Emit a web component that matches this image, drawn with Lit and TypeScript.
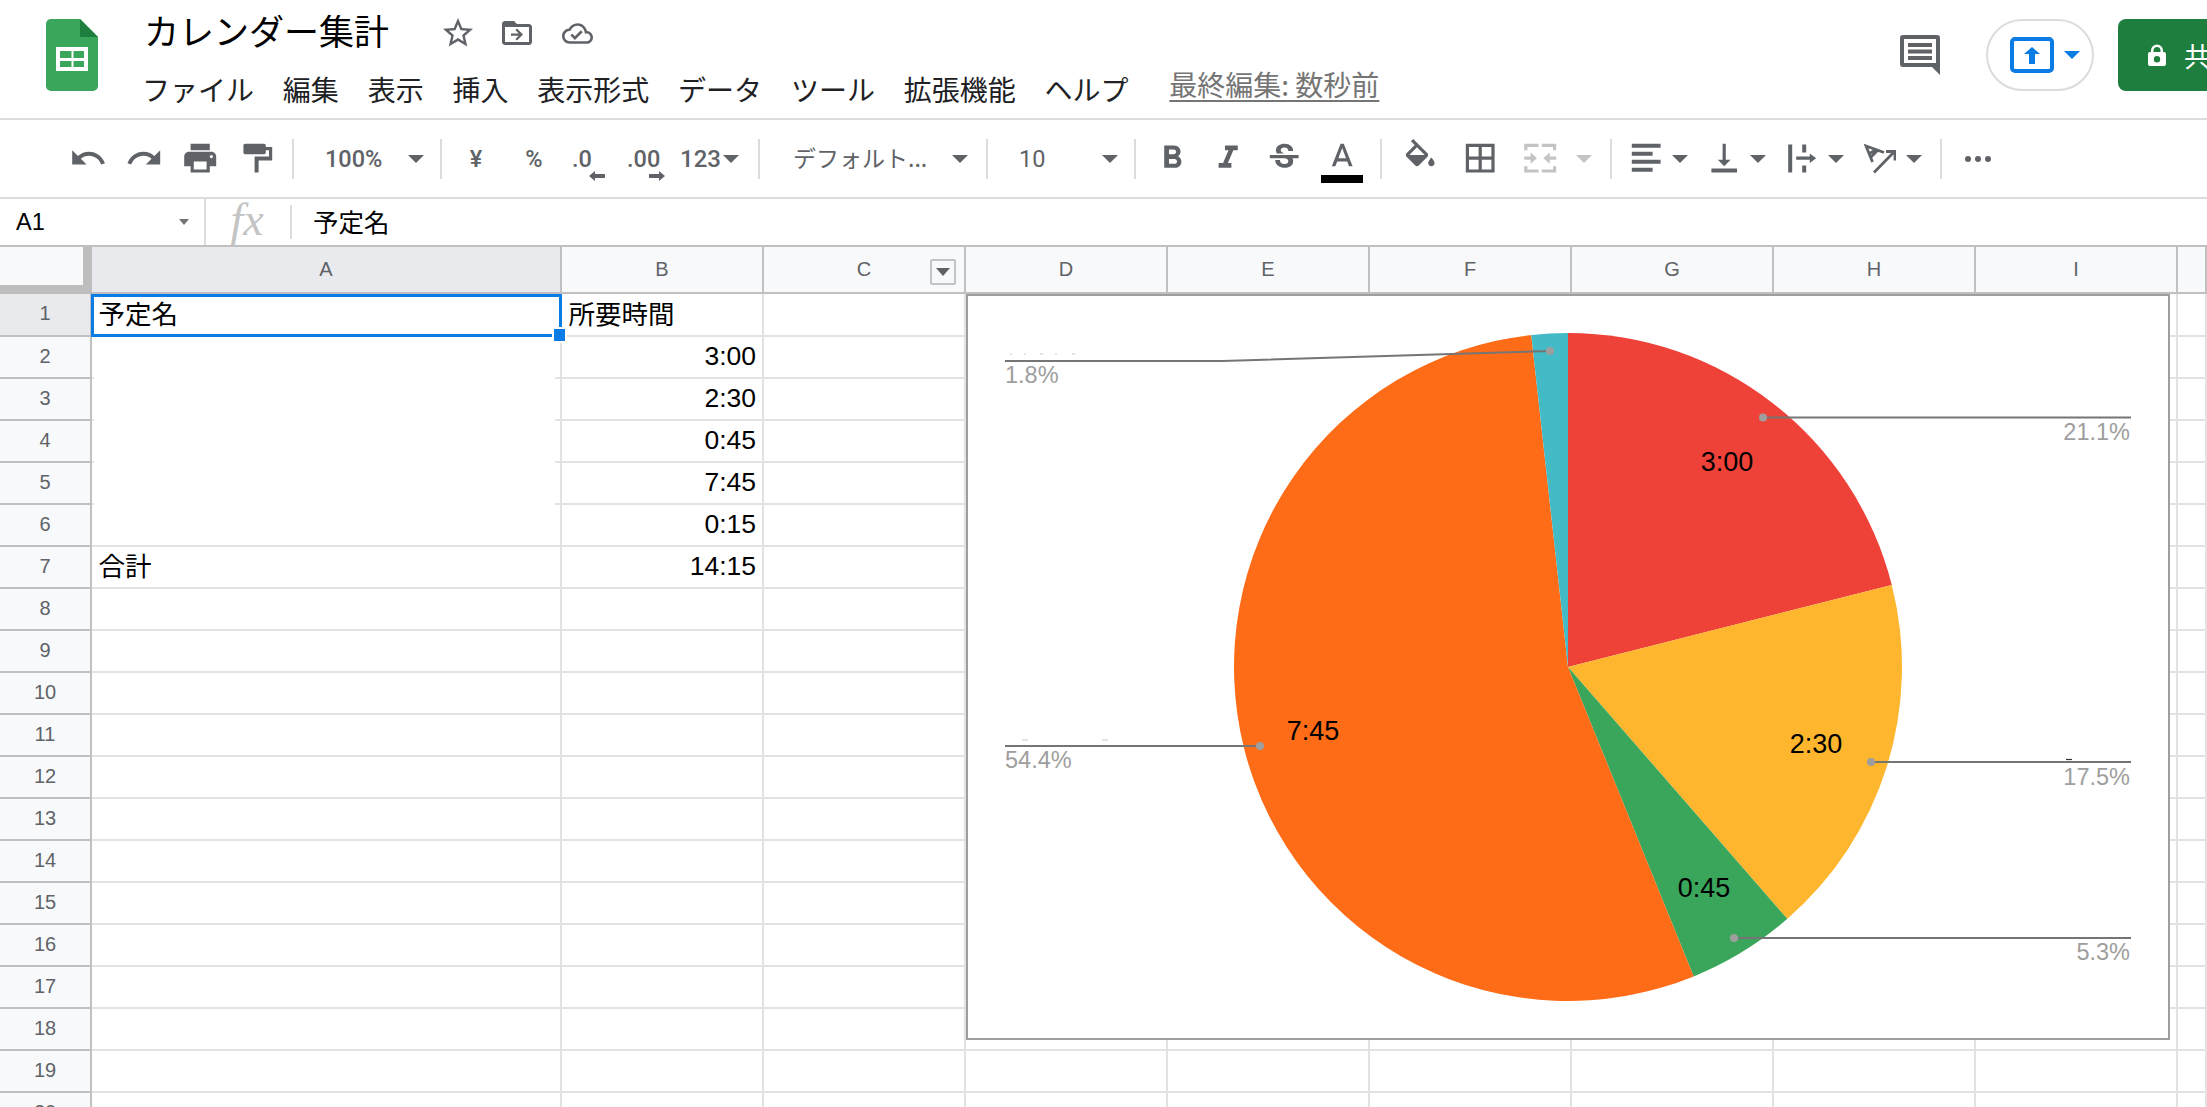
import { LitElement, html, css, svg } from "lit";
import { customElement } from "lit/decorators.js";

const ICON = {
  undo: "M12.5 8c-2.65 0-5.05.99-6.9 2.6L2 7v9h9l-3.62-3.62c1.39-1.16 3.16-1.88 5.12-1.88 3.54 0 6.55 2.31 7.6 5.5l2.37-.78C21.08 11.03 17.15 8 12.5 8z",
  redo: "M18.4 10.6C16.55 8.99 14.15 8 11.5 8c-4.65 0-8.58 3.03-9.96 7.22L3.9 16c1.05-3.19 4.05-5.5 7.6-5.5 1.95 0 3.73.72 5.12 1.88L13 16h9V7l-3.6 3.6z",
  print: "M19 8H5c-1.66 0-3 1.34-3 3v6h4v4h12v-4h4v-6c0-1.66-1.34-3-3-3zm-3 11H8v-5h8v5zm3-7c-.55 0-1-.45-1-1s.45-1 1-1 1 .45 1 1-.45 1-1 1zm-1-9H6v4h12V3z",
  paint: "M17 3H5c-.55 0-1 .45-1 1v4.5c0 .55.45 1 1 1h12c.55 0 1-.45 1-1V7h2v4h-9v10h2.5v-7.5H22V5h-4V4c0-.55-.45-1-1-1z",
  star: "M22 9.24l-7.19-.62L12 2 9.19 8.63 2 9.24l5.46 4.73L5.82 21 12 17.27 18.18 21l-1.63-7.03L22 9.24zM12 15.4l-3.76 2.27 1-4.28-3.32-2.88 4.38-.38L12 6.1l1.71 4.04 4.38.38-3.32 2.88 1 4.28L12 15.4z",
  folder: "M20 6h-8l-2-2H4c-1.1 0-2 .9-2 2v12c0 1.1.9 2 2 2h16c1.1 0 2-.9 2-2V8c0-1.1-.9-2-2-2zm0 12H4V8h16v10zM12 9l-1.06 1.06 2.19 2.19H8v1.5h5.13l-2.19 2.19L12 17l4-4z",
  cloud: "M19.35 10.04C18.67 6.59 15.64 4 12 4 9.11 4 6.6 5.64 5.35 8.04 2.34 8.36 0 10.91 0 14c0 3.31 2.69 6 6 6h13c2.76 0 5-2.24 5-5 0-2.64-2.05-4.78-4.65-4.96zM19 18H6c-2.21 0-4-1.79-4-4 0-2.05 1.53-3.76 3.56-3.97l1.07-.11.5-.95C8.08 7.14 9.94 6 12 6c2.62 0 4.88 1.86 5.39 4.43l.3 1.5 1.53.11c1.56.1 2.78 1.41 2.78 2.96 0 1.65-1.35 3-3 3zm-9-3.82l-2.09-2.09L6.5 13.5 10 17l6.01-6.01-1.41-1.41z",
  bold: "M15.6 10.79c.97-.67 1.65-1.77 1.65-2.79 0-2.26-1.75-4-4-4H7v14h7.04c2.09 0 3.71-1.7 3.71-3.79 0-1.52-.86-2.82-2.15-3.42zM10 6.5h3c.83 0 1.5.67 1.5 1.5s-.67 1.5-1.5 1.5h-3v-3zm3.5 9H10v-3h3.5c.83 0 1.5.67 1.5 1.5s-.67 1.5-1.5 1.5z",
  italic: "M10 4v3h2.21l-3.42 8H6v3h8v-3h-2.21l3.42-8H18V4z",
  strike: "M6.85 7.08C6.85 4.37 9.45 3 12.24 3c1.64 0 3 .49 3.9 1.28.77.65 1.46 1.73 1.46 3.24h-3.01c0-.31-.05-.59-.15-.85-.29-.86-1.2-1.28-2.25-1.28-1.86 0-2.34 1.02-2.34 1.7 0 .48.25.88.74 1.21.38.25.77.48 1.41.7H7.39c-.21-.34-.54-.89-.54-1.92zM21 12v-2H3v2h9.62c1.15.45 1.96.75 1.96 1.97 0 1-.81 1.67-2.28 1.67-1.54 0-2.93-.54-2.93-2.51H6.4c0 .55.08 1.13.24 1.58.81 2.29 3.29 3.3 5.67 3.3 2.27 0 5.3-.89 5.3-4.05 0-.3-.01-1.16-.48-1.96H21z",
  textA: "M11 3L5.5 17h2.25l1.12-3h6.25l1.12 3h2.25L13 3h-2zm-1.38 9L12 5.67 14.38 12H9.62z",
  fill: "M16.56 8.94L7.62 0 6.21 1.41l2.38 2.38-5.15 5.15c-.59.59-.59 1.54 0 2.12l5.5 5.5c.29.29.68.44 1.06.44s.77-.15 1.06-.44l5.5-5.5c.59-.58.59-1.53 0-2.12zM5.21 10L10 5.21 14.79 10H5.21zM19 11.5s-2 2.17-2 3.5c0 1.1.9 2 2 2s2-.9 2-2c0-1.33-2-3.5-2-3.5z",
  borders: "M3 3v18h18V3H3zm8 16H5v-6h6v6zm0-8H5V5h6v6zm8 8h-6v-6h6v6zm0-8h-6V5h6v6z",
  merge: "M2 3h9v2H4v2H2zM13 3h9v4h-2V5h-7zM2 17h2v2h7v2H2zM20 17h2v4h-9v-2h7zM2 11h4V8.5l4 3.5-4 3.5V13H2zM22 11h-4V8.5L14 12l4 3.5V13h4z",
  align: "M3 3h18v2.5H3zM3 8h13v2.5H3zM3 13h18v2.5H3zM3 18h13v2.5H3z",
  valign: "M16 13h-3V3h-2v10H8l4 4 4-4zM4 18.5v2.5h16v-2.5H4z",
  wrap: "M3.25 3.5h2.5V21h-2.5zM12 3.5h2.5v5H12zM12 16.5h2.5V21H12zM8.25 11h8.5V9l4 3-4 3v-2h-8.5z",
};

const icon = (d: string, cls = "") =>
  html`<svg class="i ${cls}" viewBox="0 0 24 24"><path d=${d}></path></svg>`;

const caret = html`<span class="caret"></span>`;

interface Slice { v: number; color: string; }
const SLICES: Slice[] = [
  { v: 180, color: "#ee4239" },
  { v: 150, color: "#fdb62d" },
  { v: 45, color: "#3aa65b" },
  { v: 465, color: "#ff6c17" },
  { v: 15, color: "#42bbc6" },
];

const COLS = ["A", "B", "C", "D", "E", "F", "G", "H", "I", ""];
const MENU = ["ファイル", "編集", "表示", "挿入", "表示形式", "データ", "ツール", "拡張機能", "ヘルプ"];
const CELLS: Record<number, [string, string]> = {
  1: ["予定名", "所要時間"],
  2: ["", "3:00"],
  3: ["", "2:30"],
  4: ["", "0:45"],
  5: ["", "7:45"],
  6: ["", "0:15"],
  7: ["合計", "14:15"],
};

function piePaths() {
  const cx = 1568, cy = 667, r = 334;
  const total = SLICES.reduce((s, x) => s + x.v, 0);
  let a = 0;
  return SLICES.map((s) => {
    const a0 = a;
    a += (s.v / total) * Math.PI * 2;
    const x0 = cx + r * Math.sin(a0), y0 = cy - r * Math.cos(a0);
    const x1 = cx + r * Math.sin(a), y1 = cy - r * Math.cos(a);
    const large = a - a0 > Math.PI ? 1 : 0;
    return svg`<path fill=${s.color} d="M${cx} ${cy}L${x0} ${y0}A${r} ${r} 0 ${large} 1 ${x1} ${y1}Z"></path>`;
  });
}

@customElement("app-root")
export class AppRoot extends LitElement {
  static styles = css`
    :host {
      display: block;
      width: 2207px;
      height: 1107px;
      overflow: hidden;
      background: #fff;
      font-family: "Liberation Sans", "Noto Sans CJK JP", sans-serif;
      color: #000;
    }
    .page { display: flex; flex-direction: column; width: 2207px; height: 1107px; overflow: hidden; }
    .i { width: 38.4px; height: 38.4px; fill: #5f6368; flex: none; display: block; }
    .grey { fill: #c4c4c4; }

    /* title bar */
    .bar { display: flex; align-items: flex-start; height: 120px; box-sizing: border-box; border-bottom: 2px solid #dadce0; padding-left: 46px; flex: none; }
    .logo { width: 52px; height: 72px; margin-top: 19px; flex: none; }
    .doc { flex: 1; margin-left: 46px; font-family: "Noto Sans CJK JP", sans-serif; min-width: 0; }
    .titlerow { height: 60px; display: flex; align-items: center; }
    .title { font-size: 35px; line-height: 60px; color: #000; width: 245px; white-space: nowrap; }
    .star { width: 36px; height: 36px; margin-left: 51px; margin-top: 6px; }
    .folder { width: 36px; height: 36px; margin-left: 23px; margin-top: 6px; }
    .cloud { width: 31px; height: 31px; margin-left: 27px; margin-top: 6px; }
    .menu { display: flex; gap: 28.8px; align-items: center; height: 58px; margin-left: -2px; font-size: 28px; color: #202124; white-space: nowrap; }
    .edited { margin-left: 12px; color: #757575; text-decoration: underline; text-underline-offset: 4px; margin-bottom: 10px; }
    .right { display: flex; align-items: center; height: 72px; margin-top: 19px; flex: none; }
    .comment { width: 40px; height: 40px; flex: none; }
    .pill { display: flex; align-items: center; box-sizing: border-box; width: 108px; height: 72px; margin-left: 46px; padding-left: 22px; border: 2px solid #dadce0; border-radius: 36px; }
    .present { width: 44px; height: 36px; flex: none; }
    .caret.blue { border-top-color: #0b7be6; margin-left: 10px; }
    .share { display: flex; align-items: center; box-sizing: border-box; width: 130px; height: 72px; margin-left: 24px; margin-right: -41px; padding-left: 30px; background: #1e7e3e; border-radius: 8px; color: #fff; font-family: "Noto Sans CJK JP", sans-serif; font-size: 27px; white-space: nowrap; }
    .lock { width: 18px; height: 22px; margin-right: 18px; flex: none; }

    /* toolbar */
    .tb { display: flex; align-items: center; height: 79px; box-sizing: border-box; border-bottom: 2px solid #dadce0; padding-left: 60px; flex: none; color: #5f6368; font-family: Roboto, "Noto Sans CJK JP", sans-serif; font-size: 23.5px; font-weight: 500; }
    .btn { width: 56px; height: 56px; display: flex; align-items: center; justify-content: center; flex: none; }
    .sep { width: 2px; height: 40px; background: #dadce0; flex: none; }
    .s8 { margin-left: 8px; }
    .s10 { margin-left: 10px; }
    .s18 { margin-left: 18px; }
    .caret { width: 0; height: 0; border-left: 8px solid transparent; border-right: 8px solid transparent; border-top: 8px solid #5f6368; flex: none; display: block; }
    .caret.off { border-top-color: #c4c4c4; margin-left: 6px; }
    .m2 { margin-left: 2px; }
    .drop { display: flex; align-items: center; justify-content: space-between; box-sizing: border-box; flex: none; height: 56px; white-space: nowrap; }
    .zoomd { width: 146px; padding: 0 16px 0 31px; }
    .fontd { width: 226px; padding: 0 18px 0 33px; font-family: "Noto Sans CJK JP", sans-serif; font-weight: 400; font-size: 23px; }
    .fontd > span:first-child { margin-bottom: 4px; }
    .sized { width: 146px; padding: 0 16px 0 31px; font-weight: 400; }
    .w58 { width: 58px; }
    .w60 { width: 60px; }
    .w48 { width: 48px; }
    .ml5 { margin-left: 5px; }
    .ml12 { margin-left: 12px; }
    .dec { display: flex; flex-direction: column; height: 44px; padding-top: 10px; line-height: 24px; flex: none; box-sizing: border-box; }
    .dec50 { width: 50px; padding-left: 9px; }
    .dec64 { width: 64px; padding-left: 14px; }
    .arr { width: 16px; height: 10px; fill: #5f6368; display: block; }
    .arrl { margin-left: 17px; }
    .arrr { margin-left: 22px; }
    .n123 { display: flex; align-items: center; width: 60px; gap: 2px; flex: none; font-size: 24px; margin-left: 3px; }
    .abox { position: relative; }
    .colorbar { width: 42px; height: 8px; background: #000; position: absolute; left: 7px; top: 44.5px; }
    .dots { display: flex; gap: 4px; }
    .dots span { width: 6px; height: 6px; border-radius: 50%; background: #5f6368; }

    /* formula bar */
    .fx { display: flex; align-items: center; height: 48px; box-sizing: border-box; border-bottom: 2px solid #c0c0c0; flex: none; }
    .namebox { width: 204px; height: 46px; box-sizing: border-box; padding: 0 15px 0 16px; display: flex; align-items: center; justify-content: space-between; font-size: 23.5px; color: #000; flex: none; }
    .mini { width: 0; height: 0; border-left: 5.5px solid transparent; border-right: 5.5px solid transparent; border-top: 6px solid #757575; }
    .fxsep { width: 2px; height: 46px; background: #dadce0; flex: none; }
    .fxglyph { width: 84px; height: 46px; text-align: center; font-family: "Liberation Serif", serif; font-style: italic; font-size: 46px; line-height: 42px; color: #c4c4c4; flex: none; box-sizing: border-box; padding-right: 2px; }
    .fxsep2 { width: 2px; height: 34px; background: #dadce0; flex: none; }
    .fxval { margin-left: 21px; margin-bottom: 4px; font-family: "Noto Sans CJK JP", sans-serif; font-size: 25.5px; }

    /* sheet */
    .sheet { position: relative; flex: 1; overflow: hidden; }
    .row { display: grid; grid-template-columns: 92px 470px repeat(8, 202px) 1fr; height: 42px; }
    .row.first { height: 43px; }
    .row.head { height: 47px; }
    .rh, .ch { display: flex; align-items: center; justify-content: center; background: #f8f9fa; color: #5f6368; font-size: 20px; box-sizing: border-box; border-right: 2px solid #c0c0c0; border-bottom: 2px solid #c0c0c0; }
    .rh { padding-bottom: 2px; }
    .corner { background: #f8f9fa; box-sizing: border-box; border-right: 9px solid #bdbdbd; border-bottom: 9px solid #bdbdbd; }
    .sel { background: #e8eaed; }
    .ch { position: relative; }
    .filter { position: absolute; left: 166px; top: 12px; width: 26px; height: 26px; box-sizing: border-box; border: 2px solid #c4c4c4; border-radius: 2px; display: flex; align-items: center; justify-content: center; }
    .filter i { width: 0; height: 0; border-left: 7px solid transparent; border-right: 7px solid transparent; border-top: 8px solid #5f6368; display: block; }
    .cell { display: flex; align-items: center; box-sizing: border-box; border-right: 2px solid #e2e2e2; border-bottom: 2px solid #e2e2e2; padding: 0 6px 2px 6.5px; font-size: 26.5px; white-space: nowrap; overflow: hidden; font-family: "Liberation Sans", "Noto Sans CJK JP", sans-serif; color: #000; }
    .num { justify-content: flex-end; }
    .cjk { padding-bottom: 5px; }
    .mask { position: absolute; left: 94px; top: 91px; width: 461px; height: 206px; background: #fff; }
    .cursor { position: absolute; left: 91px; top: 47px; width: 471px; height: 43px; box-sizing: border-box; border: 3px solid #0b7be6; }
    .handle { position: absolute; left: 554px; top: 82px; width: 11px; height: 12px; background: #0b7be6; outline: 2px solid #fff; }
    .chart { position: absolute; left: 966px; top: 47px; width: 1204px; height: 746px; box-sizing: border-box; border: 2px solid #9e9e9e; background: #fff; }
    .chart svg { display: block; width: 1200px; height: 742px; }
    .lbl { font-family: "Liberation Sans", sans-serif; font-size: 27px; fill: #000; text-anchor: middle; }
    .pct { font-family: "Liberation Sans", sans-serif; font-size: 23.5px; fill: #9e9e9e; }
    .end { text-anchor: end; }
    .lead { fill: none; stroke: #757575; stroke-width: 2; }
    .dot { fill: #9e9e9e; }
    .speck { stroke: #dcdcdc; stroke-width: 1.5; }
  `;

  private renderBar() {
    return html`<header class="bar">
      <svg class="logo" viewBox="0 0 52 72">
        <path fill="#3aa65b" d="M5 0h29l18 18v49a5 5 0 0 1-5 5H5a5 5 0 0 1-5-5V5a5 5 0 0 1 5-5z"></path>
        <path fill="#1e7e3e" d="M34 0l18 18H34z"></path>
        <path fill="#fff" d="M10 28h32v24H10z"></path>
        <path fill="#3aa65b" d="M14 32h11.5v7H14zM27.5 32H38v7H27.5zM14 42h11.5v6H14zM27.5 42H38v6H27.5z"></path>
      </svg>
      <div class="doc">
        <div class="titlerow">
          <span class="title">カレンダー集計</span>
          ${icon(ICON.star, "star")}
          ${icon(ICON.folder, "folder")}
          ${icon(ICON.cloud, "cloud")}
        </div>
        <nav class="menu">
          ${MENU.map((m) => html`<span>${m}</span>`)}
          <span class="edited">最終編集: 数秒前</span>
        </nav>
      </div>
      <div class="right">
        <svg class="comment" viewBox="0 0 40 40">
          <path fill="#5f6368" d="M3 0h34a3 3 0 0 1 3 3v37l-8-8H3a3 3 0 0 1-3-3V3a3 3 0 0 1 3-3z"></path>
          <path fill="#fff" d="M4 4h32v24H4z"></path>
          <path fill="#5f6368" d="M8 8h24v4H8zM8 14.5h24v4H8zM8 21h24v4H8z"></path>
        </svg>
        <div class="pill">
          <svg class="present" viewBox="0 0 44 36">
            <rect x="2" y="2" width="40" height="32" rx="3" fill="none" stroke="#0b7be6" stroke-width="4"></rect>
            <path fill="#0b7be6" d="M22 10l8 7h-5v10h-6V17h-5z"></path>
          </svg>
          <span class="caret blue"></span>
        </div>
        <div class="share">
          <svg class="lock" viewBox="0 0 18 22">
            <path fill="#fff" fill-rule="evenodd" d="M3 8V6.5a6 6 0 0 1 12 0V8h1a2 2 0 0 1 2 2v10a2 2 0 0 1-2 2H2a2 2 0 0 1-2-2V10a2 2 0 0 1 2-2zm2.5 0h7V6.5a3.5 3.5 0 0 0-7 0zM9 12a3.2 3.2 0 1 0 0 6.4A3.2 3.2 0 0 0 9 12z"></path>
          </svg>
          <span>共有</span>
        </div>
      </div>
    </header>`;
  }

  private renderToolbar() {
    return html`<div class="tb">
      <div class="btn">${icon(ICON.undo)}</div>
      <div class="btn">${icon(ICON.redo)}</div>
      <div class="btn">${icon(ICON.print)}</div>
      <div class="btn">${icon(ICON.paint)}</div>
      <div class="sep s8"></div>
      <div class="drop zoomd"><span>100%</span>${caret}</div>
      <div class="sep"></div>
      <div class="btn w58 ml5">¥</div>
      <div class="btn w58">%</div>
      <div class="dec dec50"><span>.0</span><svg class="arr arrl" viewBox="0 0 16 10"><path d="M0 5l6-5v3h10v4H6v3z"></path></svg></div>
      <div class="dec dec64"><span>.00</span><svg class="arr arrr" viewBox="0 0 16 10"><path d="M16 5l-6-5v3H0v4h10v3z"></path></svg></div>
      <div class="n123"><span>123</span>${caret}</div>
      <div class="sep s18"></div>
      <div class="drop fontd"><span>デフォルト...</span>${caret}</div>
      <div class="sep"></div>
      <div class="drop sized"><span>10</span>${caret}</div>
      <div class="sep"></div>
      <div class="btn s8">${icon(ICON.bold)}</div>
      <div class="btn">${icon(ICON.italic)}</div>
      <div class="btn">${icon(ICON.strike)}</div>
      <div class="btn m2 abox">${icon(ICON.textA, "textA")}<span class="colorbar"></span></div>
      <div class="sep s10"></div>
      <div class="btn w60 s8">${icon(ICON.fill, "fillic")}</div>
      <div class="btn w60">${icon(ICON.borders)}</div>
      <div class="btn w60">${icon(ICON.merge, "grey")}</div>
      <span class="caret off"></span>
      <div class="sep s18"></div>
      <div class="btn w48 s10">${icon(ICON.align)}</div>
      <span class="caret m2"></span>
      <div class="btn w48 ml12">${icon(ICON.valign)}</div>
      <span class="caret m2"></span>
      <div class="btn w48 ml12">${icon(ICON.wrap)}</div>
      <span class="caret m2"></span>
      <div class="btn w48 ml12">
        <svg class="rot" width="32" height="30" viewBox="0 0 32 30" fill="none" stroke="#5f6368" stroke-width="2.8">
          <path d="M8.5 18L2 2l18 6.5M5.5 9.5l7-4M7 13l7-7"></path>
          <path d="M10 28.5L29.5 8.5M22 7.5h9v9"></path>
        </svg>
      </div>
      <span class="caret m2"></span>
      <div class="sep s18"></div>
      <div class="btn s8"><div class="dots"><span></span><span></span><span></span></div></div>
    </div>`;
  }

  private renderFormula() {
    return html`<div class="fx">
      <div class="namebox"><span>A1</span><span class="mini"></span></div>
      <div class="fxsep"></div>
      <div class="fxglyph">fx</div>
      <div class="fxsep2"></div>
      <div class="fxval">予定名</div>
    </div>`;
  }

  private renderChart() {
    return html`<div class="chart">
      <svg viewBox="968 296 1200 742">
        ${piePaths()}
        <path class="lead" d="M1005 361H1223L1550 351"></path>
        <path class="lead" d="M1005 746H1260"></path>
        <path class="lead" d="M1763 417.5H2131"></path>
        <path class="lead" d="M1871 762H2131"></path>
        <path class="lead" d="M1734 938H2131"></path>
        <circle class="dot" cx="1550" cy="351" r="4"></circle>
        <circle class="dot" cx="1260" cy="746" r="4"></circle>
        <circle class="dot" cx="1763" cy="417.5" r="4"></circle>
        <circle class="dot" cx="1871" cy="762" r="4"></circle>
        <circle class="dot" cx="1734" cy="938" r="4"></circle>
        <path class="speck" d="M1010 354h2M1024 354h2M1040 354h3M1055 354h2M1072 354h3M1022 740h6M1102 740h6"></path>
        <path stroke="#333" stroke-width="1.2" d="M2066 759.5h6"></path>
        <text class="lbl" x="1727" y="470.5">3:00</text>
        <text class="lbl" x="1816" y="752.5">2:30</text>
        <text class="lbl" x="1704" y="896.5">0:45</text>
        <text class="lbl" x="1313" y="740">7:45</text>
        <text class="pct" x="1005" y="383">1.8%</text>
        <text class="pct" x="1005" y="768">54.4%</text>
        <text class="pct end" x="2130" y="440">21.1%</text>
        <text class="pct end" x="2130" y="785">17.5%</text>
        <text class="pct end" x="2130" y="960">5.3%</text>
      </svg>
    </div>`;
  }

  private renderSheet() {
    const rows = Array.from({ length: 20 }, (_, i) => i + 1);
    return html`<div class="sheet">
      <div class="row head">
        <div class="corner"></div>
        ${COLS.map(
          (c) => html`<div class="ch ${c === "A" ? "sel" : ""}">
            ${c}${c === "C" ? html`<span class="filter"><i></i></span>` : ""}
          </div>`
        )}
      </div>
      ${rows.map((n) => {
        const vals = CELLS[n] ?? ["", ""];
        return html`<div class="row ${n === 1 ? "first" : ""}">
          <div class="rh ${n === 1 ? "sel" : ""}">${n}</div>
          ${COLS.map((_, i) => {
            const v = i < 2 ? vals[i] : "";
            const kind = /^\d/.test(v) ? "num" : v ? "cjk" : "";
            return html`<div class="cell ${kind}">${v}</div>`;
          })}
        </div>`;
      })}
      <div class="mask"></div>
      <div class="cursor"></div>
      <div class="handle"></div>
      ${this.renderChart()}
    </div>`;
  }

  render() {
    return html`<div class="page">
      ${this.renderBar()} ${this.renderToolbar()} ${this.renderFormula()} ${this.renderSheet()}
    </div>`;
  }
}
